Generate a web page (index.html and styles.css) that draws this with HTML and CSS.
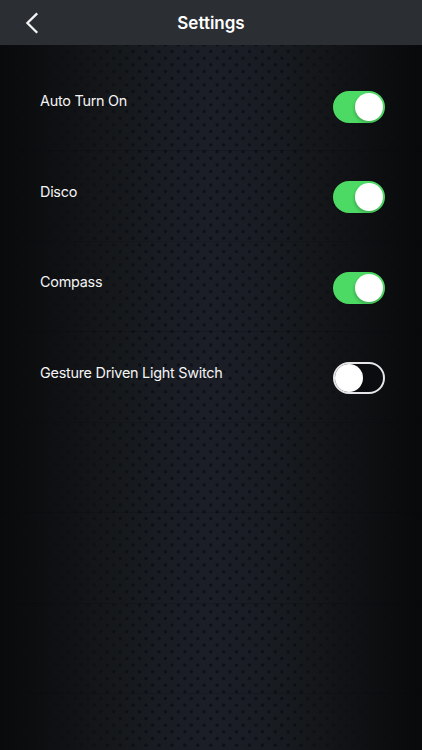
FILE: index.html
```html
<!DOCTYPE html>
<html lang="en">
<head>
<meta charset="utf-8">
<title>Settings</title>
<link rel="stylesheet" href="styles.css">
</head>
<body>
<div class="screen">
  <svg class="texture" width="422" height="750" aria-hidden="true"></svg>
  <header class="navbar">
    <button class="back" aria-label="Back">
      <svg width="14" height="22" viewBox="0 0 14 22"><path d="M12.2 1.4 2.4 11l9.8 9.8"/></svg>
    </button>
    <h1 class="title">Settings</h1>
  </header>
  <main class="list">
    <div class="row"><span class="label">Auto Turn On</span><span class="switch on"><i class="knob"></i></span></div>
    <div class="row"><span class="label">Disco</span><span class="switch on"><i class="knob"></i></span></div>
    <div class="row"><span class="label">Compass</span><span class="switch on"><i class="knob"></i></span></div>
    <div class="row"><span class="label">Gesture Driven Light Switch</span><span class="switch"><i class="knob"></i></span></div>
    <div class="row"></div>
    <div class="row"></div>
    <div class="row"></div>
  </main>
</div>
<script src="texture.js"></script>
</body>
</html>
```
FILE: texture.js
```js
// Staggered grid of perforations behind the list.
const texture = document.querySelector('.texture');
const stepX = 12.93, stepY = 6.67;
let dots = '';
for (let j = -18; j <= 90; j++) {
  const offset = j % 2 ? stepX / 2 : 0;
  for (let i = -17; i <= 17; i++) {
    dots += `<circle cx="${(210.7 + offset + i * stepX).toFixed(2)}" cy="${(158.2 + j * stepY).toFixed(2)}" r="1.7"/>`;
  }
}
texture.innerHTML = dots;
```
FILE: styles.css
```css
* { box-sizing: border-box; }
body { margin: 0; background: #08090b; }
.screen {
  position: relative;
  width: 422px;
  height: 750px;
  overflow: hidden;
  color: #fff;
  font-family: Inter, "Liberation Sans", sans-serif;
  background: linear-gradient(90deg, #090a0c 0, #0d0e10 40px, #121316 80px, #16191c 125px, #191c23 165px, #1b1e26 211px, #191c23 260px, #16191c 300px, #121316 340px, #0d0e10 380px, #08090b 422px);
}
.texture {
  position: absolute;
  inset: 0;
  fill: #0b0d14;
  fill-opacity: .75;
  -webkit-mask-image: linear-gradient(90deg, transparent 10px, #000 130px, #000 292px, transparent 400px);
  mask-image: linear-gradient(90deg, transparent 10px, #000 130px, #000 292px, transparent 400px);
}
.navbar {
  position: relative;
  display: grid;
  grid-template-columns: 60px 1fr 60px;
  align-items: center;
  height: 45px;
  background: #2b2e32;
}
.back { display: flex; width: 60px; height: 45px; padding: 0 0 0 25px; align-items: center; border: 0; background: none; }
.back path { fill: none; stroke: #f4f4f5; stroke-width: 2.3; }
.title { margin: 0; padding-top: 2px; text-align: center; font-size: 17px; line-height: 43px; font-weight: 600; }
.list { position: relative; padding-top: 16px; }
.row {
  display: flex;
  justify-content: space-between;
  align-items: flex-start;
  height: 90.45px;
  padding: 30px 37px 0 40px;
  border-bottom: 1px solid rgba(8, 9, 12, .16);
}
.label { padding-top: .3px; font-size: 14.4px; line-height: 20px; letter-spacing: -.25px; white-space: nowrap; color: #f4f4f5; }
.switch {
  display: flex;
  align-items: center;
  width: 52px;
  height: 32px;
  border: 2px solid #e6e6e8;
  border-radius: 16px;
  background: #0b0c0f;
}
.knob { width: 28px; height: 28px; border-radius: 50%; background: #fff; }
.on { justify-content: flex-end; background: #4cd964; border-color: #4cd964; }
.on .knob { box-shadow: -1px 2px 3px rgba(0, 0, 0, .18); }
```
